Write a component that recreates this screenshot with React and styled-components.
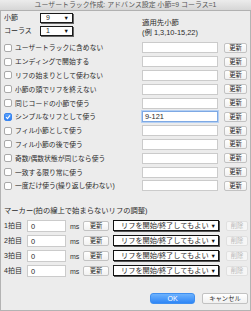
import React from "react";
import styled, { createGlobalStyle } from "styled-components";

const GlobalStyle = createGlobalStyle`
  html, body {
    margin: 0;
    padding: 0;
    background: #ececec;
  }
  body {
    font-family: "Liberation Sans", "Noto Sans CJK JP", sans-serif;
    color: #2b2b2b;
  }
`;

const options = [
  { label: "ユーザートラックに含めない", value: "" },
  { label: "エンディングで開始する", value: "" },
  { label: "リフの始まりとして使わない", value: "" },
  { label: "小節の頭でリフを終えない", value: "" },
  { label: "同じコードの小節で使う", value: "" },
  { label: "シンプルなリフとして使う", value: "9-121", checked: true },
  { label: "フィル小節として使う", value: "" },
  { label: "フィル小節の後で使う", value: "" },
  { label: "奇数/偶数状態が同じなら使う", value: "" },
  { label: "一致する限り常に使う", value: "" },
  { label: "一度だけ使う(繰り返し使わない)", value: "" },
];

const beats = ["1拍目", "2拍目", "3拍目", "4拍目"];

const Check = ({ checked }) => (
  <CheckBox $checked={checked}>
    {checked && (
      <svg width="6" height="6" viewBox="0 0 6 6">
        <path d="M1 3.2 L2.5 4.6 L5 1.3" fill="none" stroke="#fff" strokeWidth="1.1" />
      </svg>
    )}
  </CheckBox>
);

const App = () => {
  return (
    <>
      <GlobalStyle />
      <Window>
        <TitleBar>ユーザートラック作成: アドバンス設定 小節=9 コーラス=1</TitleBar>
        <Body>
          <Top>
            <PickGrid>
              <PickLabel>小節</PickLabel>
              <MiniSelect>
                <span>9</span>
                <Arrow>▼</Arrow>
              </MiniSelect>
              <PickLabel>コーラス</PickLabel>
              <MiniSelect>
                <span>1</span>
                <Arrow>▼</Arrow>
              </MiniSelect>
            </PickGrid>
            <Hint>
              <div>適用先小節</div>
              <div>(例 1,3,10-15,22)</div>
            </Hint>
          </Top>
          <OptionList>
            {options.map((o) => (
              <OptionRow key={o.label}>
                <Check checked={o.checked} />
                <OptionLabel>{o.label}</OptionLabel>
                <TextField $focused={o.checked}>{o.value}</TextField>
                <SmallButton>更新</SmallButton>
              </OptionRow>
            ))}
          </OptionList>
          <SectionTitle>マーカー(拍の線上で始まらないリフの調整)</SectionTitle>
          <MarkerList>
            {beats.map((b) => (
              <MarkerRow key={b}>
                <BeatLabel>{b}</BeatLabel>
                <MsField>0</MsField>
                <Unit>ms</Unit>
                <UpdateButton>更新</UpdateButton>
                <ModeSelect>
                  <span>リフを開始/終了してもよい</span>
                  <Arrow>▼</Arrow>
                </ModeSelect>
                <DeleteButton>削除</DeleteButton>
              </MarkerRow>
            ))}
          </MarkerList>
          <Footer>
            <PrimaryButton>OK</PrimaryButton>
            <CancelButton>キャンセル</CancelButton>
          </Footer>
        </Body>
      </Window>
    </>
  );
};

const Window = styled.div`
  width: 251px;
  height: 311px;
  box-sizing: border-box;
  border: 1px solid #b3b3b3;
  border-top: none;
  background: #ececec;
  display: flex;
  flex-direction: column;
`;

const TitleBar = styled.div`
  height: 10px;
  line-height: 10px;
  margin: 0 -1px;
  background: linear-gradient(#ececec, #d6d6d6);
  border-bottom: 1px solid #b1b1b1;
  text-align: center;
  font-size: 6.9px;
  color: #555;
  white-space: nowrap;
`;

const Body = styled.div`
  padding: 0 2px 0 3px;
  display: flex;
  flex-direction: column;
`;

const Top = styled.div`
  height: 30px;
  display: flex;
`;

const PickGrid = styled.div`
  width: 138px;
  display: grid;
  grid-template-columns: 36px 33px;
  grid-auto-rows: 13px;
  align-items: center;
`;

const PickLabel = styled.div`
  font-size: 7px;
  line-height: 9px;
`;

const MiniSelect = styled.div`
  height: 8px;
  box-sizing: content-box;
  background: #fff;
  border: 1px solid #1a1a1a;
  box-shadow: 1px 1px 0 #666;
  display: flex;
  align-items: center;
  justify-content: space-between;
  padding: 0 3px 0 5px;
  font-size: 7px;
  line-height: 8px;
`;

const Arrow = styled.span`
  font-size: 5.5px;
  line-height: 8px;
  color: #111;
`;

const Hint = styled.div`
  margin-top: 7px;
  font-size: 7.4px;
  line-height: 10px;
`;

const OptionList = styled.div`
  display: flex;
  flex-direction: column;
`;

const OptionRow = styled.div`
  height: 13.8px;
  display: grid;
  grid-template-columns: 8px 130px 76px 1fr;
  align-items: center;
`;

const CheckBox = styled.div`
  width: 8px;
  height: 8px;
  box-sizing: border-box;
  border-radius: 2px;
  border: 1px solid ${(p) => (p.$checked ? "#3a86f0" : "#a9a9a9")};
  background: ${(p) => (p.$checked ? "linear-gradient(#5aa2fb, #2f7ef2)" : "#fff")};
  display: flex;
  align-items: center;
  justify-content: center;
`;

const OptionLabel = styled.div`
  padding-left: 3px;
  font-size: 6.8px;
  line-height: 9px;
  white-space: nowrap;
`;

const TextField = styled.div`
  height: 11px;
  box-sizing: border-box;
  background: #fff;
  border: 1px solid ${(p) => (p.$focused ? "#7ea9e4" : "#cbcbcb")};
  box-shadow: ${(p) => (p.$focused ? "0 0 0 1px #b5d0f3" : "none")};
  padding-left: 2px;
  font-size: 7.4px;
  line-height: 9px;
`;

const SmallButton = styled.div`
  margin-left: 6px;
  width: 23px;
  height: 10px;
  box-sizing: border-box;
  border: 1px solid #c2c2c2;
  border-radius: 2px;
  background: linear-gradient(#ffffff, #f1f1f1);
  font-size: 6.3px;
  line-height: 8px;
  text-align: center;
`;

const SectionTitle = styled.div`
  margin-top: 13px;
  font-size: 7.3px;
  line-height: 10px;
  white-space: nowrap;
`;

const MarkerList = styled.div`
  margin-top: 2.5px;
  display: flex;
  flex-direction: column;
`;

const MarkerRow = styled.div`
  height: 15px;
  display: grid;
  grid-template-columns: 23px 39px 17px 26px 110px 1fr;
  align-items: center;
`;

const BeatLabel = styled.div`
  font-size: 7px;
  line-height: 9px;
  white-space: nowrap;
`;

const MsField = styled.div`
  height: 12px;
  box-sizing: border-box;
  background: #fff;
  border: 1px solid #cbcbcb;
  padding-left: 3px;
  font-size: 7.4px;
  line-height: 11px;
`;

const Unit = styled.div`
  padding-left: 4px;
  font-size: 7px;
  line-height: 9px;
  padding-top: 2px;
  color: #333;
`;

const UpdateButton = styled(SmallButton)`
  margin-left: 0;
  width: 26px;
`;

const ModeSelect = styled.div`
  justify-self: end;
  width: 106px;
  height: 11px;
  box-sizing: border-box;
  background: #fff;
  border: 1px solid #111;
  box-shadow: 1px 1px 0 #555;
  display: flex;
  align-items: center;
  justify-content: space-between;
  padding: 0 2px 0 7px;
  font-size: 7.2px;
  line-height: 9px;
  white-space: nowrap;
`;

const DeleteButton = styled.div`
  justify-self: end;
  width: 22px;
  height: 10px;
  box-sizing: border-box;
  border: 1px solid #e0e0e0;
  border-radius: 2px;
  background: #f6f6f6;
  color: #b9b9b9;
  font-size: 6.3px;
  line-height: 8px;
  text-align: center;
`;

const Footer = styled.div`
  margin-top: 14.5px;
  display: flex;
  justify-content: flex-end;
  gap: 7px;
`;

const PrimaryButton = styled.div`
  width: 45px;
  height: 11px;
  box-sizing: border-box;
  border-radius: 3px;
  border: 1px solid #3f8ff0;
  background: linear-gradient(#6db2fd, #2f86f6);
  color: #fff;
  font-size: 7px;
  line-height: 9px;
  text-align: center;
`;

const CancelButton = styled(SmallButton)`
  margin-left: 0;
  width: 46px;
  height: 11px;
  line-height: 9px;
`;

export default App;
